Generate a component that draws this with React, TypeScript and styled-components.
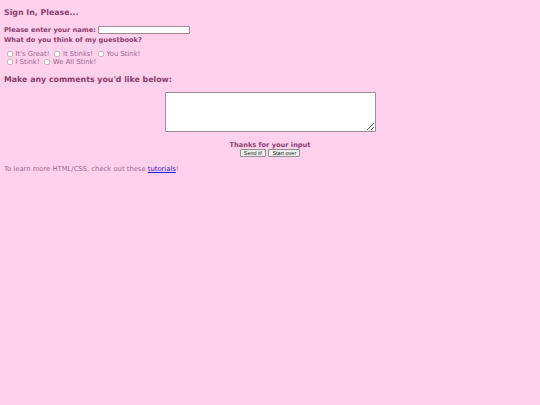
import React from "react";
import styled, { createGlobalStyle } from "styled-components";

const Global = createGlobalStyle`
  html, body { margin: 0; padding: 0; background: #ffd1ec; }
  body { font-family: "DejaVu Sans", Verdana, sans-serif; }
`;

const Page = styled.div`
  zoom: 0.5;
  width: 1080px;
  min-height: 810px;
  box-sizing: border-box;
  padding: 8px;
  background: #ffd1ec;
  color: #9a6690;
  font-family: "DejaVu Sans", Verdana, sans-serif;
`;

const Heading = styled.h3<{ $top: number }>`
  font-size: 15.7px;
  font-weight: bold;
  color: #8a3d6d;
  margin: ${(p) => p.$top}px 0 0;
  line-height: 20px;
`;

const Form = styled.form`
  margin: 0;
`;

const FieldRow = styled.div`
  display: flex;
  align-items: center;
  gap: 4px;
  height: 20px;
  margin-top: 14px;
`;

const Label = styled.label`
  font-size: 13.3px;
  font-weight: bold;
  color: #8a3d6d;
`;

const TextInput = styled.input`
  width: 184px;
  height: 17px;
  box-sizing: border-box;
  border: 1px solid #9a8a96;
  border-radius: 2px;
  background: #fff;
  font-size: 11px;
  padding: 0 2px;
  margin: 0;
`;

const Question = styled.div`
  font-size: 13.3px;
  font-weight: bold;
  color: #8a3d6d;
  line-height: 16px;
  margin-top: 2px;
`;

const Choices = styled.div`
  margin-top: 12px;
`;

const ChoiceRow = styled.div`
  display: flex;
  align-items: center;
  height: 16px;
`;

const Choice = styled.label`
  display: inline-flex;
  align-items: center;
  font-size: 13.6px;
  line-height: 16px;
  color: #9a6690;
  margin-right: 4px;
`;

const Radio = styled.input`
  width: 12px;
  height: 12px;
  margin: 0 6px 0 5px;
`;

const Center = styled.div`
  display: flex;
  flex-direction: column;
  align-items: center;
`;

const TextArea = styled.textarea`
  width: 422px;
  height: 80px;
  box-sizing: border-box;
  border: 1px solid #9a8a96;
  border-radius: 2px;
  background: #fff;
  margin: 13px 0 0;
  resize: both;
`;

const Thanks = styled.div`
  font-size: 13.3px;
  font-weight: bold;
  color: #8a3d6d;
  margin-top: 18px;
  line-height: 16px;
`;

const Buttons = styled.div`
  display: flex;
  gap: 4px;
`;

const Button = styled.button`
  font-family: "Liberation Sans", Arial, sans-serif;
  font-size: 11px;
  height: 16px;
  padding: 0 6px;
  border: 1px solid #8f8f8f;
  border-radius: 2px;
  background: #efefef;
  color: #222;
  line-height: 14px;
`;

const Footer = styled.p`
  font-size: 13.6px;
  line-height: 16px;
  margin: 16px 0 0;
  color: #9a6690;
`;

const Link = styled.a`
  color: #2a1bd6;
`;

const rows = [
  ["It's Great!", "It Stinks!", "You Stink!"],
  ["I Stink!", "We All Stink!"],
];

export default function App() {
  return (
    <>
      <Global />
      <Page>
        <Heading $top={8}>Sign In, Please...</Heading>
        <Form onSubmit={(e) => e.preventDefault()}>
          <FieldRow>
            <Label htmlFor="name">Please enter your name:</Label>
            <TextInput id="name" type="text" />
          </FieldRow>
          <Question>What do you think of my guestbook?</Question>
          <Choices>
            {rows.map((row, i) => (
              <ChoiceRow key={i}>
                {row.map((c) => (
                  <Choice key={c}>
                    <Radio type="radio" name="opinion" />
                    {c}
                  </Choice>
                ))}
              </ChoiceRow>
            ))}
          </Choices>
          <Heading $top={18}>Make any comments you'd like below:</Heading>
          <Center>
            <TextArea />
            <Thanks>Thanks for your input</Thanks>
            <Buttons>
              <Button type="submit">Send it!</Button>
              <Button type="reset">Start over</Button>
            </Buttons>
          </Center>
        </Form>
        <Footer>
          To learn more HTML/CSS, check out these <Link href="#">tutorials</Link>!
        </Footer>
      </Page>
    </>
  );
}
